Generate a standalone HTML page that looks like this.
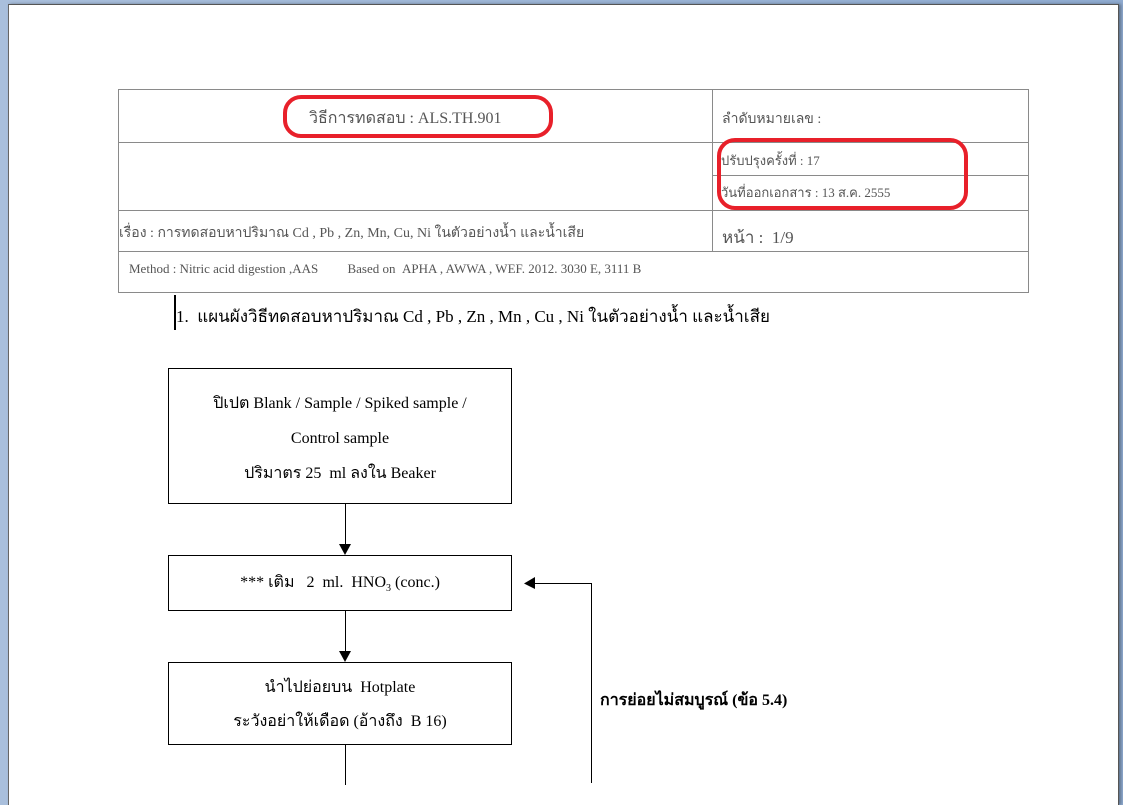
<!DOCTYPE html>
<html><head><meta charset="utf-8"><style>
body{margin:0;width:1123px;height:781px;overflow:hidden;background:linear-gradient(90deg,#a9bfdc,#8fabd0);font-family:"Liberation Serif","DejaVu Serif",serif;position:relative}
.page{position:absolute;left:8px;top:4px;width:1109px;height:800px;background:#fff;border-top:1px solid #555;border-left:1px solid #666;border-right:1px solid #555;box-shadow:2px 0 3px rgba(0,0,0,.35)}
.a{position:absolute;white-space:nowrap}
.h{position:absolute;background:#8a8a8a;height:1px}
.v{position:absolute;background:#8a8a8a;width:1px}
.g{color:#555}
.box{position:absolute;border:1px solid #000;box-sizing:border-box;text-align:center;font-size:16px;color:#000}
.ln{position:absolute;background:#000;width:1px}
.red{position:absolute;border:4px solid #e8202a;border-radius:18px;box-sizing:border-box}
</style></head><body>
<div class="page"></div>
<div class="h" style="left:118px;top:89px;width:911px"></div>
<div class="h" style="left:118px;top:142px;width:911px"></div>
<div class="h" style="left:712px;top:175px;width:317px"></div>
<div class="h" style="left:118px;top:210px;width:911px"></div>
<div class="h" style="left:118px;top:251px;width:911px"></div>
<div class="h" style="left:118px;top:292px;width:911px"></div>
<div class="v" style="left:118px;top:89px;height:204px"></div>
<div class="v" style="left:1028px;top:89px;height:204px"></div>
<div class="v" style="left:712px;top:89px;height:162px"></div>
<div class="a g" style="left:309px;top:106px;font-size:16px">วิธีการทดสอบ : ALS.TH.901</div>
<div class="a g" style="left:722px;top:108px;font-size:14px">ลำดับหมายเลข :</div>
<div class="a g" style="left:721px;top:150px;font-size:13px">ปรับปรุงครั้งที่ : 17</div>
<div class="a g" style="left:721px;top:182px;font-size:13px">วันที่ออกเอกสาร : 13 ส.ค. 2555</div>
<div class="a g" style="left:119px;top:222px;font-size:14px">เรื่อง : การทดสอบหาปริมาณ Cd , Pb , Zn, Mn, Cu, Ni ในตัวอย่างน้ำ และน้ำเสีย</div>
<div class="a g" style="left:722px;top:224px;font-size:17px">หน้า : &nbsp;1/9</div>
<div class="a g" style="left:129px;top:261px;font-size:13px">Method : Nitric acid digestion ,AAS &nbsp; &nbsp; &nbsp; &nbsp; Based on &nbsp;APHA , AWWA , WEF. 2012. 3030 E, 3111 B</div>
<div class="red" style="left:283px;top:95px;width:270px;height:43px"></div>
<div class="red" style="left:717px;top:138px;width:251px;height:72px"></div>
<div class="ln" style="left:174px;top:295px;height:35px;width:2px"></div>
<div class="a" style="left:176px;top:303px;font-size:17px">1. &nbsp;แผนผังวิธีทดสอบหาปริมาณ Cd , Pb , Zn , Mn , Cu , Ni ในตัวอย่างน้ำ และน้ำเสีย</div>
<div class="box" style="left:168px;top:368px;width:344px;height:136px;padding-top:17px;line-height:35px">ปิเปต Blank / Sample / Spiked sample /<br>Control sample<br>ปริมาตร 25 &nbsp;ml ลงใน Beaker</div>
<div class="box" style="left:168px;top:555px;width:344px;height:56px;line-height:54px">*** เติม &nbsp; 2 &nbsp;ml. &nbsp;HNO<sub style="font-size:10px">3</sub> (conc.)</div>
<div class="box" style="left:168px;top:662px;width:344px;height:83px;padding-top:8px;line-height:34px">นำไปย่อยบน &nbsp;Hotplate<br>ระวังอย่าให้เดือด (อ้างถึง &nbsp;B 16)</div>
<div class="ln" style="left:345px;top:504px;height:44px"></div>
<svg class="a" style="left:339px;top:544px" width="13" height="12"><polygon points="0,0 12,0 6,11" fill="#000"/></svg>
<div class="ln" style="left:345px;top:611px;height:44px"></div>
<svg class="a" style="left:339px;top:651px" width="13" height="12"><polygon points="0,0 12,0 6,11" fill="#000"/></svg>
<div class="ln" style="left:345px;top:745px;height:40px"></div>
<div class="ln" style="left:591px;top:583px;height:200px"></div>
<div class="a" style="left:534px;top:583px;width:58px;height:1px;background:#000"></div>
<svg class="a" style="left:524px;top:577px" width="12" height="13"><polygon points="0,6.5 11,0 11,12" fill="#000"/></svg>
<div class="a" style="left:600px;top:688px;font-size:16px;font-weight:bold">การย่อยไม่สมบูรณ์ (ข้อ 5.4)</div>
</body></html>
